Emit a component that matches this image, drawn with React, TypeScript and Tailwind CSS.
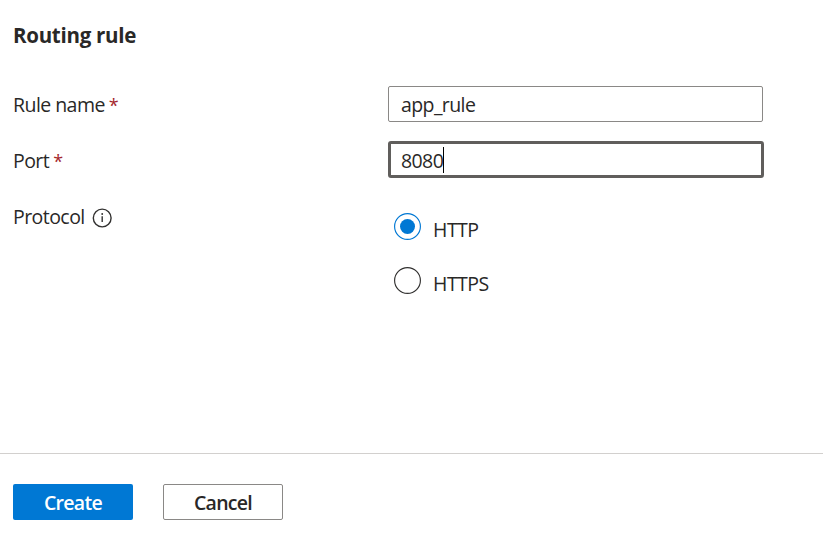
import React from "react";

const font = "font-['Open_Sans','Noto_Sans',sans-serif]";

function Label({ text, required }: { text: string; required?: boolean }) {
  return (
    <span className="text-[19.5px] leading-[26px] tracking-[-0.55px]">
      {text}
      {required && <span className="ml-[4px] text-[18px] text-[#a4262c]">*</span>}
    </span>
  );
}

function InfoIcon() {
  return (
    <svg className="mt-1 ml-[7px] h-5 w-5" viewBox="0 0 20 20" fill="none">
      <circle cx="10.2" cy="10" r="8.9" stroke="#323130" strokeWidth="1.4" />
      <path d="M10.2 8.2V14" stroke="#323130" strokeWidth="1.4" />
      <circle cx="10.2" cy="6" r="0.95" fill="#323130" />
    </svg>
  );
}

function Radio({ label, checked }: { label: string; checked?: boolean }) {
  return (
    <div className="flex h-[27px]">
      <svg className="h-[27px] w-[27px]" viewBox="0 0 27 27" fill="none">
        <circle cx="13.5" cy="13.5" r="12.9" stroke={checked ? "#0078d4" : "#323130"} strokeWidth="1.15" />
        {checked && <circle cx="13.5" cy="13.5" r="7.5" fill="#0078d4" />}
      </svg>
      <span className="mt-1 ml-3 text-[19.5px] leading-[26px] tracking-[-0.5px]">{label}</span>
    </div>
  );
}

export default function App() {
  return (
    <div className={`${font} flex h-[535px] w-[823px] flex-col overflow-hidden bg-white text-[#292827]`}>
      <div className="flex h-[453px] flex-col pl-[13px]">
        <h1 className="mt-[22px] text-[20.5px] leading-[27px] font-bold tracking-[-0.28px]">Routing rule</h1>
        <div className="mt-[37px] flex h-9">
          <div className="w-[375px] pt-[6px]"><Label text="Rule name" required /></div>
          <div className="flex h-9 w-[375px] rounded-[2px] border border-[#8a8886] pt-[5px] pl-3 text-[19.5px] leading-[26px] tracking-[-0.6px]">app_rule</div>
        </div>
        <div className="mt-[19px] flex h-[37px]">
          <div className="w-[375px] pt-[7px]"><Label text="Port" required /></div>
          <div className="flex h-[37px] w-[376px] rounded-[3px] border-3 border-[#605e5c] pt-[3px] pl-[10px] text-[19.5px] leading-[27px] tracking-[-0.6px]">
            8080<span className="h-[26px] w-px bg-black" />
          </div>
        </div>
        <div className="mt-[26px] flex">
          <div className="flex w-[381px] items-start"><Label text="Protocol" /><InfoIcon /></div>
          <div className="flex flex-col gap-[27px] pt-[9px]">
            <Radio label="HTTP" checked />
            <Radio label="HTTPS" />
          </div>
        </div>
      </div>
      <div className="flex h-[82px] gap-[30px] border-t border-[#d2d0ce] pt-[30px] pl-[13px]">
        <button className="h-9 w-[120px] rounded-[2px] bg-[#0078d4] pt-[2px] text-[19.5px] leading-[26px] font-semibold tracking-[-0.7px] text-white">Create</button>
        <button className="h-9 w-[120px] rounded-[2px] border border-[#8a8886] pt-[2px] text-[19.5px] leading-[26px] font-semibold tracking-[-0.7px]">Cancel</button>
      </div>
    </div>
  );
}
